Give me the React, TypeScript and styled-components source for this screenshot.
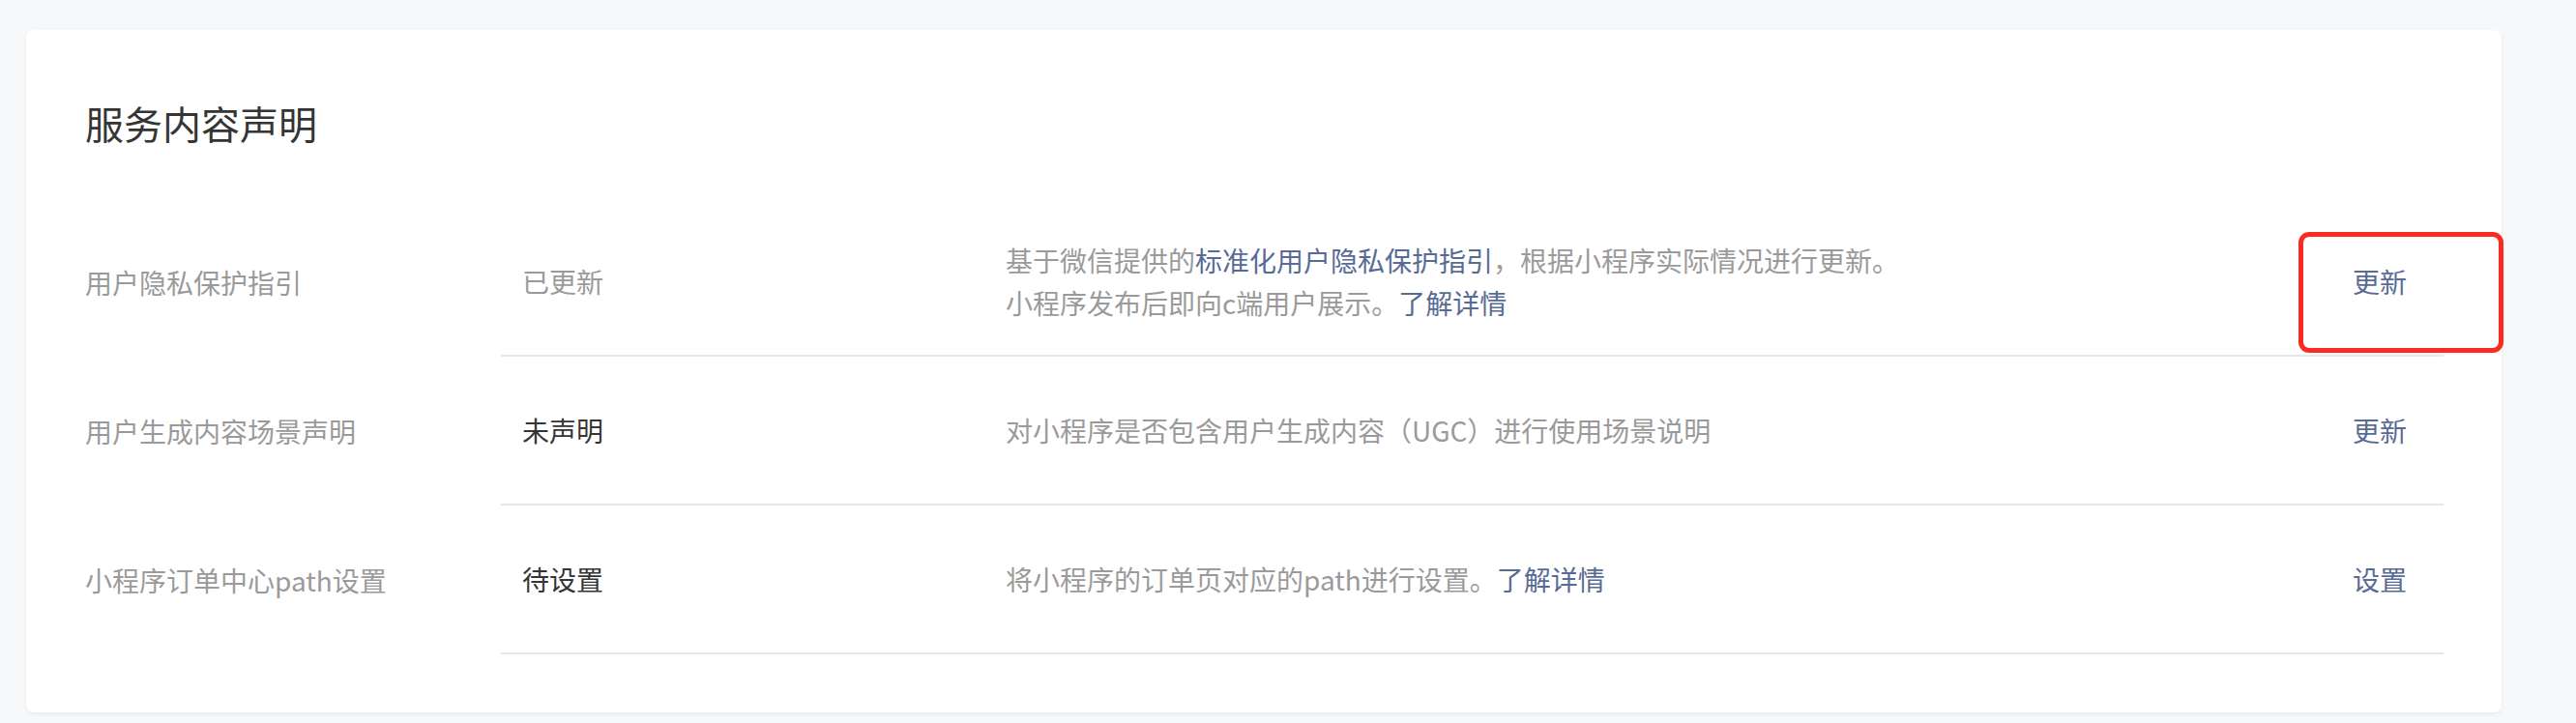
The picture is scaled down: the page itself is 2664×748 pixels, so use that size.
import React from 'react';
import styled, { createGlobalStyle } from 'styled-components';

// Page reset
const GlobalStyle = createGlobalStyle`
  html, body {
    margin: 0;
    padding: 0;
    background: #f7f8fa;
  }
  body {
    font-family: "Noto Sans CJK SC", "Noto Sans", sans-serif;
    -webkit-font-smoothing: antialiased;
  }
`;

const Page = styled.div`
  padding: 31px 77px 11px 27px;
  box-sizing: border-box;
  width: 2664px;
`;

const Card = styled.section`
  background: #ffffff;
  border-radius: 8px;
  box-shadow: 0 2px 4px rgba(0, 0, 0, 0.06);
  padding: 68px 60px 60px 61px;
`;

const Title = styled.h2`
  margin: 0 0 60px;
  font-size: 40px;
  line-height: 56px;
  font-weight: 400;
  color: #353535;
`;

const Row = styled.div`
  display: flex;
  height: 154px;
`;

const Label = styled.div`
  width: 430px;
  flex-shrink: 0;
  display: flex;
  align-items: center;
  font-size: 28px;
  line-height: 44px;
  color: #9a9a9a;
`;

const Content = styled.div`
  flex: 1;
  display: grid;
  grid-template-columns: 500px 1fr 94px;
  align-items: center;
  padding-left: 22px;
  border-bottom: 2px solid #e7e7eb;
  font-size: 28px;
  line-height: 44px;
`;

const Status = styled.div<{ $done?: boolean }>`
  color: ${(p) => (p.$done ? '#9a9a9a' : '#353535')};
`;

const Desc = styled.div`
  color: #9a9a9a;
`;

const Link = styled.a`
  color: #576b95;
  text-decoration: none;
  cursor: pointer;
`;

const ActionCell = styled.div`
  position: relative;
`;

const Action = styled.a`
  color: #576b95;
  text-decoration: none;
  cursor: pointer;
`;

// red annotation frame drawn over the first action
const Highlight = styled.div`
  position: absolute;
  left: -56px;
  top: -29px;
  width: 212px;
  height: 125px;
  box-sizing: border-box;
  border: 5px solid #fb2b22;
  border-radius: 11px;
  pointer-events: none;
`;

type Item = {
  label: string;
  status: string;
  done?: boolean;
  desc: React.ReactNode;
  action: string;
  marked?: boolean;
};

const items: Item[] = [
  {
    label: '用户隐私保护指引',
    status: '已更新',
    done: true,
    desc: (
      <>
        基于微信提供的<Link>标准化用户隐私保护指引</Link>，根据小程序实际情况进行更新。
        <br />
        小程序发布后即向c端用户展示。<Link>了解详情</Link>
      </>
    ),
    action: '更新',
    marked: true,
  },
  {
    label: '用户生成内容场景声明',
    status: '未声明',
    desc: '对小程序是否包含用户生成内容（UGC）进行使用场景说明',
    action: '更新',
  },
  {
    label: '小程序订单中心path设置',
    status: '待设置',
    desc: (
      <>
        将小程序的订单页对应的path进行设置。<Link>了解详情</Link>
      </>
    ),
    action: '设置',
  },
];

export default function App() {
  return (
    <>
      <GlobalStyle />
      <Page>
        <Card>
          <Title>服务内容声明</Title>
          {items.map((item) => (
            <Row key={item.label}>
              <Label>{item.label}</Label>
              <Content>
                <Status $done={item.done}>{item.status}</Status>
                <Desc>{item.desc}</Desc>
                <ActionCell>
                  <Action>{item.action}</Action>
                  {item.marked && <Highlight />}
                </ActionCell>
              </Content>
            </Row>
          ))}
        </Card>
      </Page>
    </>
  );
}
